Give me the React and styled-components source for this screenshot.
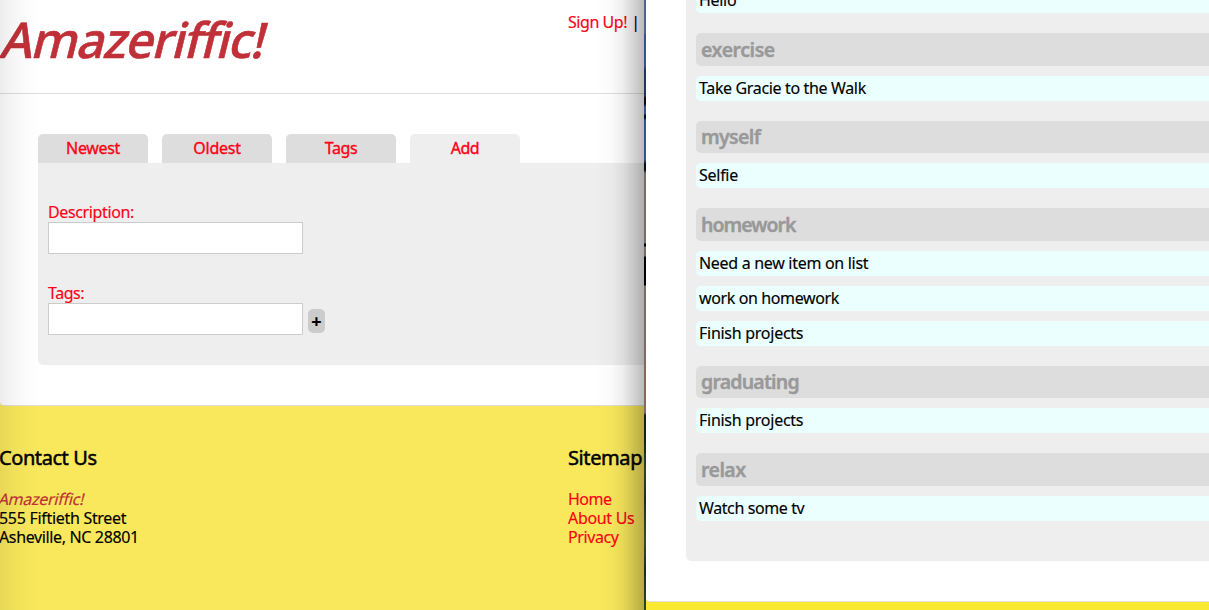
import React from 'react';
import styled, { createGlobalStyle } from 'styled-components';

const GlobalStyle = createGlobalStyle`
  * { box-sizing: border-box; }
  body { margin: 0; overflow: hidden; }
  h1, h2, h3, p { margin: 0; padding: 0; font-weight: inherit; font-size: inherit; }
`;

const Desktop = styled.div`
  display: flex;
  width: 1209px;
  height: 610px;
  overflow: hidden;
  font: 16px/19px "Noto Sans", "Open Sans", sans-serif;
  -webkit-text-stroke: 0.15px currentColor;
  color: #000;
`;

const BackWindow = styled.div`
  position: relative;
  display: flex;
  flex-direction: column;
  width: 644px;
  flex: none;
  overflow: hidden;
  background: #f9e85c;

  &::after {
    content: "";
    position: absolute;
    inset: 0;
    pointer-events: none;
    background:
      linear-gradient(to right, rgba(0, 0, 0, 0.075), rgba(0, 0, 0, 0.035) 14px, rgba(0, 0, 0, 0.01) 28px, transparent 42px),
      linear-gradient(to left, rgba(0, 0, 0, 0.27), rgba(0, 0, 0, 0.18) 9px, rgba(0, 0, 0, 0.07) 21px, rgba(0, 0, 0, 0.02) 32px, transparent 48px);
  }
`;

const Wallpaper = styled.div`
  width: 2px;
  flex: none;
  background: linear-gradient(
    #55618a 0 34px, #34528f 34px 66px, #203759 70px 96px, #080d18 98px 104px,
    #34528f 107px 114px, #080d18 115px 118px, #34528f 120px 160px, #080d18 164px 170px,
    #796c62 173px 243px, #000 244px 246px, #796c62 247px 256px, #000 257px 285px,
    #796c65 286px 340px, #89675f 380px 413px, #14250e 415px 440px, #29491c 470px,
    #1c3415 500px, #315323 540px, #1b3013 570px, #2b4820 610px
  );
`;

const FrontWindow = styled.div`
  display: flex;
  flex-direction: column;
  flex: 1;
  min-width: 0;
  background: #fae931;
`;

const Header = styled.header`
  display: flex;
  justify-content: space-between;
  height: 94px;
  flex: none;
  border-bottom: 1px solid #ddd;
  background: #fff;
`;

const Logo = styled.h1`
  margin: 6px 0 0 -1px;
  font-size: 49px;
  line-height: 67px;
  font-weight: 500;
  letter-spacing: -1.25px;
  font-variant-ligatures: none;
  color: #c03038;
  -webkit-text-stroke: 0.6px currentColor;
  transform: skewX(-14deg);
  transform-origin: 0 52px;
`;

const Account = styled.div`
  width: 76px;
  padding-top: 13px;
  white-space: nowrap;
`;

const Label = styled.span`
  letter-spacing: ${(p) => p.$tracking || 0}px;
`;

const Link = styled(Label)`
  color: #ff0014;
`;

const Main = styled.main`
  height: 312px;
  flex: none;
  padding: 40px 0 0 38px;
  border-bottom: 1px solid #e2dfd0;
  border-bottom-left-radius: 4px;
  background: #fff;
`;

const Tabs = styled.nav`
  display: flex;
  gap: 14px;
`;

const Tab = styled.div`
  width: 110px;
  height: 29px;
  padding-top: 5px;
  border-radius: 5px 5px 0 0;
  background: ${(p) => (p.$active ? '#eee' : '#ddd')};
  text-align: center;
  -webkit-text-stroke: 0.35px #ff0014;
`;

const Panel = styled.section`
  display: flex;
  flex-direction: column;
  gap: 30px;
  height: 202px;
  padding: 40px 0 0 10px;
  border-bottom-left-radius: 5px;
  background: #eee;
`;

const Field = styled.label`
  display: flex;
  flex-direction: column;
`;

const FieldName = styled(Link)`
  height: 19px;
  line-height: 19px;
`;

const FieldRow = styled.div`
  display: flex;
  align-items: flex-start;
  gap: 5px;
`;

const TextInput = styled.input`
  display: block;
  width: 255px;
  height: 32px;
  padding: 5px;
  border: 1px solid #ccc;
  outline: 0;
  background: #fff;
`;

const AddButton = styled.button`
  display: flex;
  align-items: center;
  justify-content: center;
  width: 17px;
  height: 24px;
  margin-top: 6px;
  padding: 0;
  border: 0;
  border-radius: 5px;
  background: #ccc;
  color: #000;
  font: 700 18px/20px "Noto Sans", sans-serif;
`;

const Footer = styled.footer`
  display: flex;
  justify-content: space-between;
  padding-top: 39px;
`;

const FooterColumn = styled.div`
  width: ${(p) => p.$width || 'auto'};
  margin-left: ${(p) => p.$shift || 0};
  white-space: nowrap;
`;

const FooterTitle = styled.h2`
  margin-bottom: 20px;
  font-size: 20px;
  line-height: 25px;
  letter-spacing: ${(p) => p.$tracking}px;
  -webkit-text-stroke: 0.5px currentColor;
`;

const Brand = styled.span`
  display: inline-block;
  color: #c03038;
  font-variant-ligatures: none;
  letter-spacing: -0.27px;
  transform: skewX(-14deg);
`;

const Page = styled.div`
  height: 602px;
  flex: none;
  padding-left: 40px;
  border-bottom: 1px solid #e2e2e2;
  border-bottom-left-radius: 4px;
  background: #fff;
  overflow: hidden;
`;

const TodoPanel = styled.section`
  display: flex;
  flex-direction: column;
  gap: 20px;
  height: 561px;
  margin-right: -10px;
  padding-left: 10px;
  border-bottom-left-radius: 5px;
  background: #eee;
`;

const TagGroup = styled.div`
  display: flex;
  flex-direction: column;
  flex: none;
  gap: 10px;
`;

const FirstGroup = styled(TagGroup)`
  margin-top: -12px;
`;

const TagTitle = styled.h3`
  height: 32.5px;
  padding: 3.5px 5px 0;
  border-radius: 5px;
  background: #ddd;
  color: #999;
  font-size: 19.5px;
  line-height: 26px;
  font-weight: 650;
  letter-spacing: ${(p) => p.$tracking}px;
  -webkit-text-stroke: 0.4px currentColor;
`;

const Todo = styled.p`
  height: 25px;
  padding: 3px;
  border-radius: 5px;
  background: #ebffff;
  letter-spacing: ${(p) => p.$tracking}px;
`;

const tabs = [
  { name: 'Newest', tracking: -0.35 },
  { name: 'Oldest', tracking: -0.25 },
  { name: 'Tags', tracking: -0.4 },
  { name: 'Add', tracking: -0.5, active: true },
];

const groups = [
  { tag: 'exercise', tracking: -0.45, todos: [['Take Gracie to the Walk', -0.35]] },
  { tag: 'myself', tracking: -0.65, todos: [['Selfie', -0.27]] },
  {
    tag: 'homework',
    tracking: -1,
    todos: [
      ['Need a new item on list', -0.3],
      ['work on homework', -0.38],
      ['Finish projects', -0.27],
    ],
  },
  { tag: 'graduating', tracking: -0.8, todos: [['Finish projects', -0.27]] },
  { tag: 'relax', tracking: -0.55, todos: [['Watch some tv', -0.4]] },
];

export default function App() {
  return (
    <Desktop>
      <GlobalStyle />
      <BackWindow>
        <Header>
          <Logo>Amazeriffic!</Logo>
          <Account>
            <Link $tracking={-0.45}>Sign Up!</Link> |
          </Account>
        </Header>
        <Main>
          <Tabs>
            {tabs.map((t) => (
              <Tab key={t.name} $active={t.active}>
                <Link $tracking={t.tracking}>{t.name}</Link>
              </Tab>
            ))}
          </Tabs>
          <Panel>
            <Field>
              <FieldName $tracking={-0.37}>Description:</FieldName>
              <TextInput />
            </Field>
            <Field>
              <FieldName $tracking={-0.45}>Tags:</FieldName>
              <FieldRow>
                <TextInput />
                <AddButton>+</AddButton>
              </FieldRow>
            </Field>
          </Panel>
        </Main>
        <Footer>
          <FooterColumn $shift="-1px">
            <FooterTitle $tracking={-0.42}>Contact Us</FooterTitle>
            <p><Brand>Amazeriffic!</Brand></p>
            <p><Label $tracking={-0.3}>555 Fiftieth Street</Label></p>
            <p><Label $tracking={-0.36}>Asheville, NC 28801</Label></p>
          </FooterColumn>
          <FooterColumn $width="76px">
            <FooterTitle $tracking={-0.4}>Sitemap</FooterTitle>
            <p><Link $tracking={-0.5}>Home</Link></p>
            <p><Link $tracking={-0.32}>About Us</Link></p>
            <p><Link $tracking={-0.4}>Privacy</Link></p>
          </FooterColumn>
        </Footer>
      </BackWindow>
      <Wallpaper />
      <FrontWindow>
        <Page>
          <TodoPanel>
            <FirstGroup>
              <Todo $tracking={-0.3}>Hello</Todo>
            </FirstGroup>
            {groups.map((g) => (
              <TagGroup key={g.tag}>
                <TagTitle $tracking={g.tracking}>{g.tag}</TagTitle>
                {g.todos.map(([text, tracking]) => (
                  <Todo key={text} $tracking={tracking}>{text}</Todo>
                ))}
              </TagGroup>
            ))}
          </TodoPanel>
        </Page>
      </FrontWindow>
    </Desktop>
  );
}
